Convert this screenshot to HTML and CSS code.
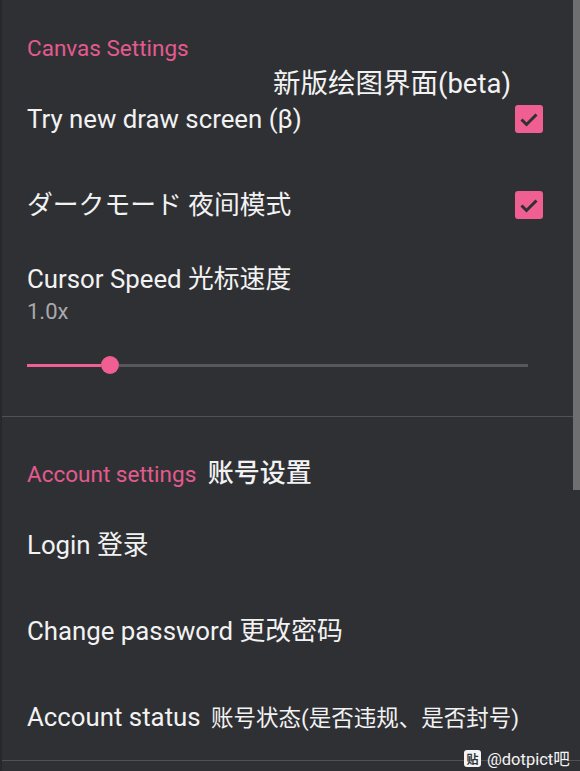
FILE: index.html
```html
<!DOCTYPE html>
<html lang="zh">
<head>
    <meta charset="UTF-8">
    <meta name="viewport" content="width=device-width, initial-scale=1.0">
    <title>Settings</title>
    <link rel="stylesheet" href="styles.css">
</head>
<body>
    <div class="screen">
        <div class="category first">Canvas Settings</div>
        <div class="note">新版绘图界面(beta)</div>

        <div class="pref pref-draw">
            <span class="title">Try new draw screen (β)</span>
            <span class="checkbox">
                <svg viewBox="0 0 28 28" width="28" height="28"><polyline points="6.5,14.5 11.5,19.5 21.5,9.5" /></svg>
            </span>
        </div>

        <div class="pref pref-dark">
            <span class="title">ダークモード 夜间模式</span>
            <span class="checkbox">
                <svg viewBox="0 0 28 28" width="28" height="28"><polyline points="6.5,14.5 11.5,19.5 21.5,9.5" /></svg>
            </span>
        </div>

        <div class="pref-slider">
            <div class="title">Cursor Speed 光标速度</div>
            <div class="summary">1.0x</div>
            <div class="slider">
                <div class="track-active"></div>
                <div class="thumb"></div>
                <div class="track"></div>
            </div>
        </div>

        <div class="divider"></div>

        <div class="category account">Account settings <span class="cn-head">账号设置</span></div>

        <div class="pref pref-login"><span class="title">Login 登录</span></div>
        <div class="pref pref-gap"><span class="title">Change password 更改密码</span></div>
        <div class="pref pref-gap"><span class="title">Account status <span class="cn-small">账号状态(是否违规、是否封号)</span></span></div>

        <div class="divider bottom"></div>

        <div class="scrollbar"></div>
        <div class="watermark"><span class="tieba">贴</span>@dotpict吧</div>
    </div>
</body>
</html>
```
FILE: styles.css
```css
body {
    margin: 0;
    padding: 0;
    background-color: #2f3034;
    font-family: Roboto, "Noto Sans CJK SC", sans-serif;
    color: #f2f2f2;
}

.screen {
    position: relative;
    width: 578px;
    height: 771px;
    border-left: 2px solid #27282b;
    background-color: #2f3034;
    overflow: hidden;
}

.category {
    color: #e35b8e;
    font-size: 22.5px;
    height: 28px;
    line-height: 28px;
    padding-left: 25px;
}

.category.first {
    margin-top: 34px;
}

.note {
    margin-top: 7px;
    height: 30px;
    line-height: 30px;
    font-size: 27.5px;
    padding-left: 271px;
    white-space: nowrap;
}

.pref {
    display: flex;
    align-items: center;
    justify-content: space-between;
    height: 40px;
    padding-left: 25px;
    padding-right: 37px;
}

.title {
    font-size: 25.8px;
    line-height: 30px;
    white-space: nowrap;
}

.pref-dark {
    margin-top: 46px;
}

.checkbox {
    display: flex;
    width: 28px;
    height: 28px;
    background: #ef5f91;
    border-radius: 3px;
}

.checkbox svg polyline {
    fill: none;
    stroke: #2f3034;
    stroke-width: 3;
}

.pref-slider {
    margin-top: 39px;
    padding-left: 25px;
    padding-right: 52px;
}

.summary {
    margin-top: 6px;
    font-size: 22px;
    line-height: 24px;
    color: #a9a9ac;
}

.slider {
    display: flex;
    align-items: center;
    height: 24px;
    margin-top: 29px;
}

.track-active {
    width: 74px;
    height: 3px;
    background: #ef5f91;
}

.thumb {
    width: 18px;
    height: 18px;
    border-radius: 50%;
    background: #ef5f91;
    flex-shrink: 0;
}

.track {
    flex: 1;
    height: 3px;
    background: #57585c;
}

.divider {
    margin-top: 39px;
    height: 1px;
    background: #505155;
}

.category.account {
    margin-top: 41px;
    height: 30px;
    line-height: 30px;
}

.cn-head {
    color: #f2f2f2;
    font-size: 26px;
    font-weight: 500;
    margin-left: 6px;
}

.pref-login {
    margin-top: 37px;
}

.pref-gap {
    margin-top: 46px;
}

.cn-small {
    font-size: 22.5px;
    margin-left: 4px;
}

.divider.bottom {
    margin-top: 23px;
}

.scrollbar {
    position: absolute;
    top: 0;
    right: 0;
    width: 7px;
    height: 490px;
    background: #6f6f72;
}

.watermark {
    position: absolute;
    left: 462px;
    top: 746px;
    display: flex;
    align-items: center;
    gap: 6px;
    font-size: 16.5px;
    color: #f4f4f4;
}

.tieba {
    display: inline-flex;
    align-items: center;
    justify-content: center;
    width: 17px;
    height: 17px;
    border-radius: 3px;
    background: #f4f4f4;
    color: #2f3034;
    font-size: 12px;
    font-weight: 700;
}
```
